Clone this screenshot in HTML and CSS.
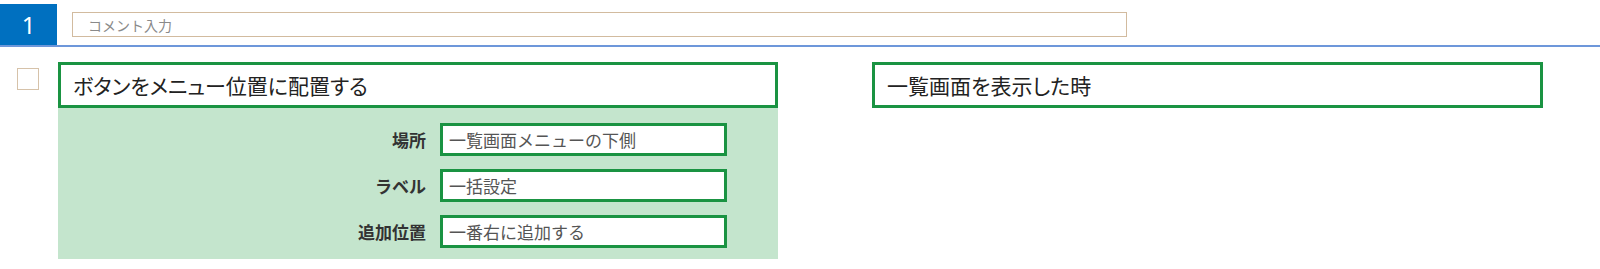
FILE: index.html
```
<!DOCTYPE html>
<html lang="ja">
<head>
    <meta charset="UTF-8">
    <meta name="viewport" content="width=device-width, initial-scale=1.0">
    <link rel="stylesheet" href="styles.css">
    <title>ボタン設定</title>
</head>
<body>
    <div class="step-header">
        <div class="step-no">1</div>
        <input type="text" class="comment" placeholder="コメント入力">
    </div>

    <div class="step-body">
        <div class="check-col">
            <div class="check"></div>
        </div>

        <div class="action-col">
            <div class="title-box">ボタンをメニュー位置に配置する</div>
            <div class="params">
                <label class="param-label">場所</label>
                <div class="param-field">一覧画面メニューの下側</div>
                <label class="param-label">ラベル</label>
                <div class="param-field">一括設定</div>
                <label class="param-label">追加位置</label>
                <div class="param-field">一番右に追加する</div>
            </div>
        </div>

        <div class="trigger-col">
            <div class="title-box">一覧画面を表示した時</div>
        </div>
    </div>
</body>
</html>
```

FILE: styles.css
```
body {
    margin: 0;
    font-family: "Noto Sans CJK JP", "Noto Sans", sans-serif;
    color: #333;
    background: #fff;
}

.step-header {
    display: flex;
    align-items: flex-start;
    height: 47px;
    padding-top: 4px;
    box-sizing: border-box;
    border-bottom: 2px solid #6d97da;
}

.step-no {
    width: 57px;
    height: 41px;
    background-color: #0070c0;
    color: #fff;
    font-family: "Noto Sans", sans-serif;
    font-size: 24px;
    display: flex;
    align-items: center;
    justify-content: center;
}

.comment {
    margin-left: 15px;
    margin-top: 8px;
    width: 1055px;
    height: 25px;
    box-sizing: border-box;
    border: 1px solid #d2bb9f;
    padding: 0 15px;
    font-family: inherit;
    font-size: 14px;
    outline: none;
}

.comment::placeholder {
    color: #8a8a8a;
}

.step-body {
    display: flex;
    align-items: flex-start;
    margin-top: 15px;
}

.check-col {
    width: 58px;
    padding-top: 6px;
    padding-left: 17px;
    box-sizing: border-box;
}

.check {
    width: 22px;
    height: 22px;
    box-sizing: border-box;
    border: 1px solid #d6c2a9;
    background: #fff;
}

.action-col {
    width: 720px;
}

.trigger-col {
    width: 671px;
    margin-left: 94px;
}

.title-box {
    height: 46px;
    box-sizing: border-box;
    border: 3px solid #1a9342;
    padding-left: 12px;
    display: flex;
    align-items: center;
    font-size: 21px;
    font-feature-settings: "palt";
    color: #222;
    background: #fff;
}

.params {
    background-color: #c4e5cd;
    display: grid;
    grid-template-columns: 368px 287px;
    column-gap: 14px;
    row-gap: 13px;
    align-items: center;
    padding: 15px 0 11px;
}

.param-label {
    text-align: right;
    font-weight: bold;
    font-size: 17px;
    color: #333;
}

.param-field {
    height: 33px;
    box-sizing: border-box;
    border: 3px solid #1a9342;
    background: #fff;
    padding-left: 6px;
    display: flex;
    align-items: center;
    font-size: 17px;
    color: #555;
}
```
